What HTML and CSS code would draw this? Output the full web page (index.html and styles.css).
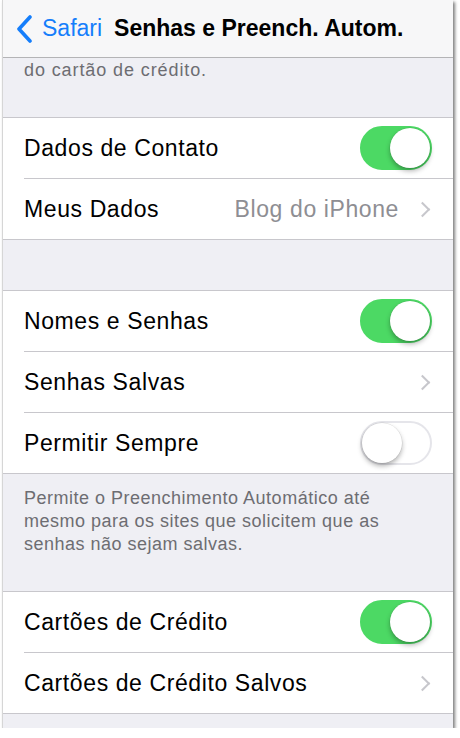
FILE: index.html
```html
<!DOCTYPE html>
<html lang="pt-BR">
<head>
    <meta charset="UTF-8">
    <meta name="viewport" content="width=device-width, initial-scale=1.0">
    <title>Senhas e Preench. Autom.</title>
    <link rel="stylesheet" href="styles.css">
</head>
<body>
    <div class="screen">
        <header class="navbar">
            <a class="back" href="#">
                <svg class="back-icon" width="18" height="28" viewBox="0 0 18 28">
                    <polyline points="15,2 4,14 15,26" fill="none" stroke="#157efb" stroke-width="3.6" stroke-linecap="round" stroke-linejoin="round"/>
                </svg>
                <span>Safari</span>
            </a>
            <h1 class="title">Senhas e Preench. Autom.</h1>
        </header>

        <p class="note note-top">do cartão de crédito.</p>

        <div class="group">
            <div class="row">
                <div class="row-body">
                    <span class="label">Dados de Contato</span>
                    <span class="switch on"></span>
                </div>
            </div>
            <div class="row">
                <div class="row-body">
                    <span class="label">Meus Dados</span>
                    <span class="value">Blog do iPhone</span>
                    <span class="chevron"></span>
                </div>
            </div>
        </div>

        <div class="spacer"></div>

        <div class="group">
            <div class="row">
                <div class="row-body">
                    <span class="label">Nomes e Senhas</span>
                    <span class="switch on"></span>
                </div>
            </div>
            <div class="row">
                <div class="row-body">
                    <span class="label">Senhas Salvas</span>
                    <span class="chevron"></span>
                </div>
            </div>
            <div class="row">
                <div class="row-body">
                    <span class="label">Permitir Sempre</span>
                    <span class="switch"></span>
                </div>
            </div>
        </div>

        <p class="note">Permite o Preenchimento Automático até mesmo para os sites que solicitem que as senhas não sejam salvas.</p>

        <div class="group">
            <div class="row">
                <div class="row-body">
                    <span class="label">Cartões de Crédito</span>
                    <span class="switch on"></span>
                </div>
            </div>
            <div class="row">
                <div class="row-body">
                    <span class="label">Cartões de Crédito Salvos</span>
                    <span class="chevron"></span>
                </div>
            </div>
        </div>
    </div>
</body>
</html>
```

FILE: styles.css
```css
:root {
    --blue: #157efb;
    --green: #4cd964;
    --bg: #efeff4;
    --line: #c8c7cc;
    --note: #6d6d72;
    --detail: #8e8e93;
}

body {
    margin: 0;
    background: #fff;
    font-family: 'Liberation Sans', Arial, Helvetica, sans-serif;
}

.screen {
    width: 450px;
    height: 728px;
    margin-left: 2px;
    overflow: hidden;
    background: var(--bg);
    border-left: 1px solid #d6d6d6;
    box-shadow: 2px 2px 3px rgba(0, 0, 0, 0.5);
}

/* barra de navegação */
.navbar {
    height: 57px;
    display: flex;
    align-items: center;
    background: #f7f7f8;
    border-bottom: 1px solid #b4b4b6;
}

.back {
    display: flex;
    align-items: center;
    gap: 9px;
    padding-left: 12px;
    color: var(--blue);
    text-decoration: none;
    font-size: 23px;
}

.back-icon {
    display: block;
}

.title {
    margin: 0 0 0 12px;
    font-size: 23px;
    font-weight: 700;
    color: #000;
}

/* textos de rodapé */
.note {
    margin: 0;
    padding: 13px 24px 35px 21px;
    font-size: 18px;
    letter-spacing: 0.5px;
    line-height: 23px;
    color: var(--note);
}

.note-top {
    padding-top: 1px;
    letter-spacing: 0.9px;
}

.spacer {
    height: 50px;
}

/* grupos */
.group {
    background: #fff;
    border-top: 1px solid var(--line);
    border-bottom: 1px solid var(--line);
}

.row {
    padding-left: 21px;
}

.row-body {
    height: 60px;
    display: flex;
    align-items: center;
    padding-right: 21px;
    border-bottom: 1px solid var(--line);
}

.row:last-child .row-body {
    border-bottom: none;
}

.label,
.value {
    font-size: 23px;
    letter-spacing: 0.6px;
}

.label {
    flex: 1;
    color: #000;
}

.value {
    color: var(--detail);
    margin-right: 18px;
}

.chevron {
    width: 9px;
    height: 9px;
    margin-right: 4px;
    border-top: 2.5px solid #c7c7cc;
    border-right: 2.5px solid #c7c7cc;
    transform: rotate(45deg);
}

/* interruptores */
.switch {
    position: relative;
    width: 72px;
    height: 44px;
    box-sizing: border-box;
    border-radius: 22px;
    border: 2px solid #e5e5ea;
    background: #fff;
}

.switch::after {
    content: '';
    position: absolute;
    top: 0;
    left: 0;
    width: 40px;
    height: 40px;
    border-radius: 50%;
    background: #fff;
    box-shadow: 0 3px 5px rgba(0, 0, 0, 0.3), 0 0 0 0.5px rgba(0, 0, 0, 0.1);
}

.switch.on {
    background: var(--green);
    border-color: var(--green);
}

.switch.on::after {
    left: 28px;
}
```
